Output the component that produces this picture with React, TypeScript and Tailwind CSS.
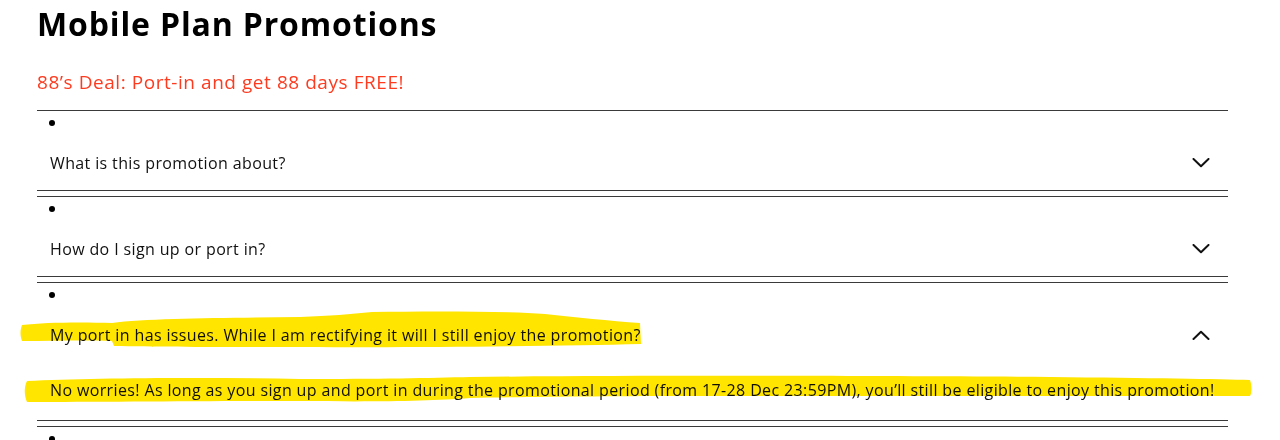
import React from "react";

const font = { fontFamily: '"Open Sans", "Noto Sans", sans-serif' };

function Chevron({ up }: { up?: boolean }) {
  return (
    <svg width="18" height="10" viewBox="0 0 18 10" fill="none" className="shrink-0">
      <path
        d={up ? "M1.5 9 L9 1.8 L16.5 9" : "M1.5 1 L9 8.2 L16.5 1"}
        stroke="#111"
        strokeWidth="2"
        strokeLinecap="round"
        strokeLinejoin="round"
      />
    </svg>
  );
}

function Item({ q, a, open }: { q: string; a?: string; open?: boolean }) {
  return (
    <div className="border-t border-b border-[#3a3a3a]">
      <div className="h-[24px] flex items-center pl-[12px]">
        <span className="block w-[6px] h-[6px] rounded-full bg-black" />
      </div>
      <div className="h-[55px] flex items-center justify-between pl-[13px] pr-[18px]">
        <span className="text-[16px] tracking-[0.37px] text-[#111]">{q}</span>
        <Chevron up={open} />
      </div>
      {open && a && (
        <div className="pl-[13px] pt-[16px] pb-[18px] text-[16px] tracking-[0.37px] leading-[24px] text-[#111]">{a}</div>
      )}
    </div>
  );
}

export default function App() {
  return (
    <div className="relative w-[1280px] h-[440px] overflow-hidden bg-white" style={font}>
      <div className="pl-[37px] pr-[52px]">
        <h1 className="pt-[2px] text-[32px] leading-[44px] font-bold text-black tracking-[0.85px]">Mobile Plan Promotions</h1>
        <div className="mt-[22px] text-[19px] leading-[28px] text-[#fe3b1f] tracking-[0.55px]">88’s Deal: Port-in and get 88 days FREE!</div>
        <div className="mt-[14px] flex flex-col gap-[5px]">
          <Item q="What is this promotion about?" />
          <Item q="How do I sign up or port in?" />
          <Item
            q="My port in has issues. While I am rectifying it will I still enjoy the promotion?"
            a="No worries! As long as you sign up and port in during the promotional period (from 17-28 Dec 23:59PM), you’ll still be eligible to enjoy this promotion!"
            open
          />
          <div className="border-t border-[#3a3a3a]">
            <div className="h-[24px] flex items-center pl-[12px]">
              <span className="block w-[6px] h-[6px] rounded-full bg-black" />
            </div>
          </div>
        </div>
      </div>
      <svg
        className="absolute left-0 top-0 pointer-events-none mix-blend-multiply"
        width="1280"
        height="440"
        viewBox="0 0 1280 440"
      >
        <path
          d="M22 325 C45 322 85 322 112 323 C150 318 230 318 300 317 C330 316 350 314 372 312 C430 311 500 311 545 314 C575 317 610 321 640 323 L641 344 C560 346 420 348 300 347 C220 347 160 347 114 346 L112 341 C85 340 50 341 22 341 C20 336 20 330 22 325 Z"
          fill="#ffe500"
        />
        <path
          d="M27 381 C90 378 200 377 300 379 C380 379 430 378 470 377 C650 375 900 376 1050 377 C1150 378 1220 379 1250 380 C1252 386 1252 392 1250 396 C1100 396 900 396 700 396 C600 396 520 397 470 398 C430 401 380 402 300 401 C200 401 100 402 27 402 C24 395 24 387 27 381 Z"
          fill="#ffe500"
        />
      </svg>
    </div>
  );
}
